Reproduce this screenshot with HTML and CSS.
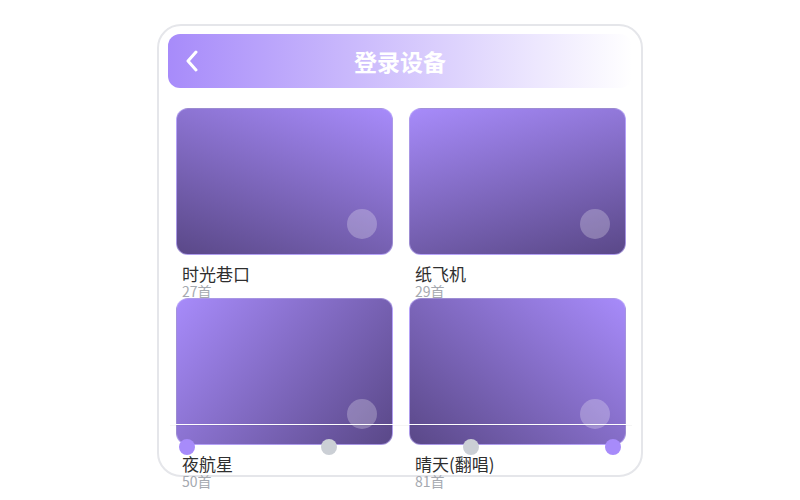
FILE: index.html
```html
<!DOCTYPE html>
<html lang="zh-CN">
<head>
  <meta charset="UTF-8" />
  <meta name="viewport" content="width=device-width, initial-scale=1.0"/>
  <title>登录设备</title>
  <link rel="stylesheet" href="styles.css">
</head>
<body>
  <div class="phone">
    <div class="header">
      <span class="back">
        <svg width="14" height="22" viewBox="0 0 14 22">
          <path d="M11 2 L3 11 L11 20" fill="none" stroke="#fff" stroke-width="3" stroke-linecap="round" stroke-linejoin="round"/>
        </svg>
      </span>
      <h1 class="title">登录设备</h1>
    </div>

    <div class="grid">
      <div class="item">
        <div class="cover cover-1"><span class="play"></span></div>
        <div class="name">时光巷口</div>
        <div class="count">27首</div>
      </div>
      <div class="item">
        <div class="cover cover-2"><span class="play"></span></div>
        <div class="name">纸飞机</div>
        <div class="count">29首</div>
      </div>
      <div class="item">
        <div class="cover cover-3"><span class="play"></span></div>
        <div class="name">夜航星</div>
        <div class="count">50首</div>
      </div>
      <div class="item">
        <div class="cover cover-4"><span class="play"></span></div>
        <div class="name">晴天(翻唱)</div>
        <div class="count">81首</div>
      </div>
    </div>

    <div class="track"></div>
    <div class="steps">
      <span class="dot on"></span>
      <span class="dot"></span>
      <span class="dot"></span>
      <span class="dot on"></span>
    </div>
  </div>
</body>
</html>
```

FILE: styles.css
```css
* {
  box-sizing: border-box;
}

body {
  margin: 0;
  padding: 0;
  font-family: "Noto Sans CJK SC", "Noto Sans", sans-serif;
  background-color: #ffffff;
  display: flex;
  justify-content: center;
  align-items: center;
  height: 100vh;
}

.phone {
  position: relative;
  width: 486px;
  height: 453px;
  border: 2px solid #e5e6ea;
  border-radius: 24px;
  padding: 8px 9px;
  background: #fff;
}

.header {
  position: relative;
  height: 54px;
  border-radius: 12px;
  background: linear-gradient(to right, #a78bfa, rgba(167, 139, 250, 0));
  display: flex;
  align-items: center;
  justify-content: center;
}

.back {
  position: absolute;
  left: 17px;
  top: 16px;
  display: flex;
}

.title {
  margin: 0;
  color: #fff;
  font-size: 23px;
  font-weight: 700;
}

.grid {
  display: grid;
  grid-template-columns: repeat(2, 1fr);
  column-gap: 16px;
  margin: 20px 6px 0 8px;
}

.item {
  height: 190px;
}

.cover {
  position: relative;
  height: 147px;
  border-radius: 12px;
  border: 1px solid rgba(196, 181, 253, 0.6);
}

.cover-1 { background: linear-gradient(200deg, #a78bfa, #5a4888); }
.cover-2 { background: linear-gradient(165deg, #a78bfa, #5a4888); }
.cover-3 { background: linear-gradient(130deg, #a78bfa, #5a4888); }
.cover-4 { background: linear-gradient(220deg, #a78bfa, #5a4888); }

.play {
  position: absolute;
  right: 15px;
  bottom: 15px;
  width: 30px;
  height: 30px;
  border-radius: 50%;
  background: rgba(255, 255, 255, 0.25);
}

.name {
  margin: 10px 0 0 6px;
  font-size: 17px;
  line-height: 18px;
  color: #2f2f2f;
}

.count {
  margin-left: 6px;
  font-size: 14px;
  line-height: 16px;
  color: #a5a9b0;
}

.track {
  position: absolute;
  left: 11px;
  top: 398px;
  width: 462px;
  height: 1px;
  background: #fff;
  box-shadow: 0 1px 0 rgba(0, 0, 0, 0.04);
}

.steps {
  position: absolute;
  left: 20px;
  top: 413px;
  width: 442px;
  display: flex;
  justify-content: space-between;
}

.dot {
  width: 16px;
  height: 16px;
  border-radius: 50%;
  background: #cbcfd5;
}

.dot.on {
  background: #a78bfa;
}
```
